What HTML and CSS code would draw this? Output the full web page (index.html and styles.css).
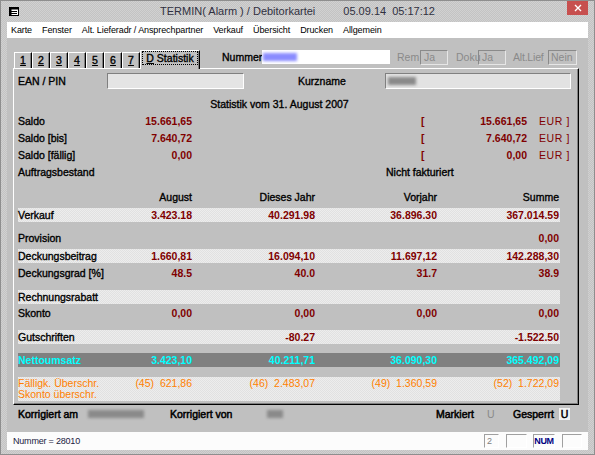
FILE: index.html
```html
<!DOCTYPE html>
<html>
<head>
<meta charset="utf-8">
<title>TERMIN</title>
<link rel="stylesheet" href="styles.css">
</head>
<body>
<div class="window">
  <div class="titlebar">
    <div class="tb-left">
      <svg class="app-icon" width="10" height="9" viewBox="0 0 10 9"><rect x="0.5" y="0.5" width="9" height="8" fill="#fff" stroke="#000"/><rect x="0" y="0" width="10" height="2.5" fill="#000"/><path d="M2 4.5h6M2 6.5h6" stroke="#000" stroke-width="1"/><rect x="0" y="0" width="2.5" height="9" fill="#000"/></svg>
    </div>
    <div class="tb-title"><span>TERMIN( Alarm ) / Debitorkartei</span><span class="tb-date">05.09.14</span><span class="tb-time">05:17:12</span></div>
    <div class="tb-right">
      <div class="close-btn"><svg width="8" height="8" viewBox="0 0 8 8"><path d="M1 1L7 7M7 1L1 7" stroke="#fff" stroke-width="1.4"/></svg></div>
    </div>
  </div>
  <div class="frame">
    <div class="menubar">
      <span>Karte</span><span>Fenster</span><span>Alt. Lieferadr / Ansprechpartner</span><span>Verkauf</span><span>Übersicht</span><span>Drucken</span><span>Allgemein</span>
    </div>
    <div class="client">
      <div class="toprow">
        <div class="tabs">
          <div class="tab"><u>1</u></div>
          <div class="tab"><u>2</u></div>
          <div class="tab"><u>3</u></div>
          <div class="tab"><u>4</u></div>
          <div class="tab"><u>5</u></div>
          <div class="tab"><u>6</u></div>
          <div class="tab"><u>7</u></div>
          <div class="tab active"><span class="focus"><u>D</u> Statistik</span></div>
        </div>
        <span class="nummer-lbl">Nummer</span>
        <div class="nummer-field"><span class="blur blur-blue"></span></div>
        <span class="dis rem-lbl">Rem</span><div class="flag">Ja</div>
        <span class="dis doku-lbl">Doku</span><div class="flag">Ja</div>
        <span class="dis alt-lbl">Alt.Lief</span><div class="flag flag-wide">Nein</div>
      </div>

      <div class="panel">
        <div class="ean-row">
          <span class="ean-lbl">EAN / PIN</span>
          <div class="sunken ean-field"></div>
          <span class="kurz-lbl">Kurzname</span>
          <div class="sunken kurz-field"><span class="blur blur-grey"></span></div>
        </div>
        <div class="heading">Statistik vom 31. August 2007</div>

        <div class="saldo-row"><span>Saldo</span><span class="val">15.661,65</span><span></span><span class="eur"><span class="val">[</span><span class="val">15.661,65<span class="cur">EUR ]</span></span></span></div>
        <div class="saldo-row"><span>Saldo [bis]</span><span class="val">7.640,72</span><span></span><span class="eur"><span class="val">[</span><span class="val">7.640,72<span class="cur">EUR ]</span></span></span></div>
        <div class="saldo-row"><span>Saldo [fällig]</span><span class="val">0,00</span><span></span><span class="eur"><span class="val">[</span><span class="val">0,00<span class="cur">EUR ]</span></span></span></div>
        <div class="auftrag-row"><span>Auftragsbestand</span><span>Nicht fakturiert</span></div>

        <div class="srow head"><span></span><span>August</span><span>Dieses Jahr</span><span>Vorjahr</span><span>Summe</span></div>
        <div class="srow band mt4"><span>Verkauf</span><span class="val">3.423.18</span><span class="val">40.291.98</span><span class="val">36.896.30</span><span class="val">367.014.59</span></div>
        <div class="srow mt9"><span>Provision</span><span></span><span></span><span></span><span class="val">0,00</span></div>
        <div class="srow band mt4"><span>Deckungsbeitrag</span><span class="val">1.660,81</span><span class="val">16.094,10</span><span class="val">11.697,12</span><span class="val">142.288,30</span></div>
        <div class="srow mt3"><span>Deckungsgrad [%]</span><span class="val">48.5</span><span class="val">40.0</span><span class="val">31.7</span><span class="val">38.9</span></div>
        <div class="srow band mt10"><span>Rechnungsrabatt</span><span></span><span></span><span></span><span></span></div>
        <div class="srow mt2"><span>Skonto</span><span class="val">0,00</span><span class="val">0,00</span><span class="val">0,00</span><span class="val">0,00</span></div>
        <div class="srow band mt10"><span>Gutschriften</span><span></span><span class="val">-80.27</span><span></span><span class="val">-1.522.50</span></div>
        <div class="srow netto mt9"><span>Nettoumsatz</span><span class="val">3.423,10</span><span class="val">40.211,71</span><span class="val">36.090,30</span><span class="val">365.492,09</span></div>
        <div class="srow band faellig mt10"><span>Fälligk. Überschr.<br>Skonto überschr.</span><span class="val">(45)&nbsp; 621,86</span><span class="val">(46)&nbsp; 2.483,07</span><span class="val">(49)&nbsp; 1.360,59</span><span class="val">(52)&nbsp; 1.722,09</span></div>
      </div>

      <div class="footer">
        <span class="f-am">Korrigiert am</span>
        <span class="blur blur-grey f-blur1"></span>
        <span class="f-von">Korrigiert von</span>
        <span class="blur blur-grey f-blur2"></span>
        <span class="f-mark">Markiert</span>
        <span class="f-u dis">U</span>
        <span class="f-gesp">Gesperrt</span>
        <span class="f-ubox">U</span>
      </div>
    </div>
    <div class="statusbar">
      <span class="st-text">Nummer = 28010</span>
      <div class="st-boxes">
        <div class="st-box st-b1">2</div>
        <div class="st-box st-b2"></div>
        <div class="st-box st-b3">NUM</div>
        <div class="st-box st-b4"></div>
      </div>
    </div>
  </div>
</div>
</body>
</html>
```

FILE: styles.css
```css
* { box-sizing: border-box; margin: 0; padding: 0; }

body {
  margin: 0;
  width: 595px;
  height: 455px;
  overflow: hidden;
  background: #c8c8c8;
  font-family: "Liberation Sans", Arial, sans-serif;
}

.window {
  width: 595px;
  height: 455px;
  border: 1px solid #8e8e8e;
  background-color: #cacaca;
  background-image: repeating-conic-gradient(#c3c3c3 0 25%, #d1d1d1 0 50%);
  background-size: 2px 2px;
  display: flex;
  flex-direction: column;
}

/* title bar */
.titlebar {
  height: 21px;
  display: grid;
  grid-template-columns: 1fr auto 1fr;
  align-items: start;
}
.tb-left { padding: 6px 0 0 8px; }
.app-icon { display: block; }
.tb-title {
  display: flex;
  font-size: 11px;
  line-height: 21px;
  color: #303040;
  white-space: nowrap;
}
.tb-date { margin-left: 28px; }
.tb-time { margin-left: 6px; }
.tb-right { display: flex; justify-content: flex-end; padding-right: 6px; }
.close-btn {
  width: 21px;
  height: 14px;
  background: #c7504f;
  display: flex;
  align-items: center;
  justify-content: center;
}

/* frame */
.frame {
  flex: 1;
  display: flex;
  flex-direction: column;
  padding: 0 6px 4px 6px;
}

.menubar {
  height: 16px;
  background: #fff;
  display: flex;
  align-items: center;
  gap: 10px;
  padding-left: 4px;
  font-size: 9px;
  letter-spacing: -0.1px;
  color: #000;
  white-space: nowrap;
}

.client {
  flex: 1;
  background: #c0c0c0;
  padding: 0 9px 0 6px;
  display: flex;
  flex-direction: column;
  font-size: 10.5px;
  -webkit-text-stroke: 0.35px #000;
  color: #000;
  white-space: nowrap;
}

/* top row: tabs + nummer + flags */
.toprow {
  height: 30px;
  display: flex;
  align-items: flex-start;
  padding-top: 12px;
}
.tabs {
  align-self: flex-end;
  display: flex;
  align-items: flex-end;
  margin-left: 1px;
}
.tab {
  width: 18px;
  height: 16px;
  border-top: 1px solid #fff;
  border-left: 1px solid #fff;
  border-right: 1px solid #000;
  box-shadow: inset -1px 0 #808080;
  text-align: center;
  line-height: 15px;
}
.tab.active {
  width: 60px;
  height: 19px;
  margin-bottom: -1px;
  background: #c0c0c0;
  position: relative;
  z-index: 2;
  padding-top: 1px;
  line-height: 12px;
}
.focus {
  display: inline-block;
  outline: 1px dotted #000;
  padding: 0 3px;
  line-height: 12px;
}

.nummer-lbl { margin-left: 22px; width: 40px; line-height: 14px; }
.nummer-field {
  width: 128px;
  height: 14px;
  background: #fff;
  display: flex;
  align-items: center;
  overflow: hidden;
}
.dis { color: #8a8a8a; -webkit-text-stroke: 0; }
.rem-lbl, .doku-lbl, .alt-lbl { line-height: 15px; }
.rem-lbl { margin-left: 7px; width: 23px; }
.doku-lbl { margin-left: 8px; width: 22px; }
.alt-lbl { margin-left: 7px; width: 35px; letter-spacing: -0.2px; }
.flag {
  width: 28px;
  height: 15px;
  border: 1px solid;
  border-color: #8a8a8a #e6e6e6 #e6e6e6 #8a8a8a;
  color: #8a8a8a;
  -webkit-text-stroke: 0;
  line-height: 13px;
  padding-left: 3px;
}
.flag-wide { width: 29px; padding-left: 2px; }

/* blurred redacted content */
.blur {
  display: inline-block;
  height: 8px;
  filter: blur(1.6px);
}
.blur-blue { width: 34px; background: #8a8cff; margin-left: 1px; }
.blur-grey { background: #8a8a8a; }

/* panel */
.panel {
  height: 337px;
  border-top: 1px solid #fff;
  border-left: 1px solid #fff;
  border-right: 1px solid #000;
  border-bottom: 1px solid #000;
  box-shadow: inset -1px -1px #808080;
  padding: 4px 0 0 4px;
  display: flex;
  flex-direction: column;
}

.ean-row {
  display: flex;
  height: 16px;
  align-items: center;
}
.ean-lbl { width: 89px; }
.sunken {
  height: 16px;
  border: 1px solid;
  border-color: #808080 #ffffff #ffffff #808080;
  background: #e4e4e4;
}
.ean-field { width: 137px; }
.kurz-lbl { margin-left: 54px; width: 87px; }
.kurz-field {
  width: 186px;
  background: #e2e2e2;
  display: flex;
  align-items: center;
}
.kurz-field .blur { width: 28px; margin-left: 2px; }

.heading {
  width: 523px;
  text-align: center;
  padding-top: 8px;
  line-height: 14px;
  margin-bottom: 2px;
}

.val {
  font-size: 10.5px;
  font-weight: bold;
  color: #800000;
  -webkit-text-stroke: 0;
  text-align: right;
}

.saldo-row {
  display: grid;
  grid-template-columns: 100px 74px 229px 149px;
  height: 17px;
  line-height: 17px;
}
.eur {
  display: flex;
  justify-content: space-between;
}
.cur {
  font-weight: normal;
  margin-left: 12px;
  letter-spacing: 0.6px;
}

.auftrag-row {
  display: grid;
  grid-template-columns: 368px auto;
  height: 17px;
  line-height: 17px;
}

.srow {
  display: grid;
  grid-template-columns: 100px 74px 123px 122px 122px;
  width: 542px;
  height: 14px;
  line-height: 14px;
}
.srow.head { margin-top: 9px; text-align: right; }
.srow.head > span:first-child { text-align: left; }

.band {
  background-color: #e6e6e6;
  background-image: repeating-conic-gradient(#e1e1e1 0 25%, #ededed 0 50%);
  background-size: 2px 2px;
}
.netto {
  background: #808080;
  color: #00ffff;
  -webkit-text-stroke: 0;
  font-weight: bold;
}
.netto .val { color: #00ffff; }

.faellig {
  height: 24px;
  line-height: 11.5px;
  padding-top: 0.5px;
  color: #ff8000;
  -webkit-text-stroke: 0;
}
.faellig .val { color: #ff8000; font-weight: normal; }

.mt2 { margin-top: 2px; }
.mt3 { margin-top: 3px; }
.mt4 { margin-top: 4px; }
.mt9 { margin-top: 9px; }
.mt10 { margin-top: 10px; }

/* footer below panel */
.footer {
  flex: 1;
  display: flex;
  align-items: flex-start;
  padding: 2px 0 0 5px;
  line-height: 14px;
  -webkit-text-stroke: 0.5px #000;
}
.f-am { width: 70px; }
.f-blur1 { width: 56px; margin-top: 3px; }
.f-von { margin-left: 26px; width: 97px; }
.f-blur2 { width: 16px; margin-top: 3px; }
.f-mark { margin-left: 153px; width: 51px; }
.f-u { width: 26px; }
.f-gesp { width: 46px; }
.f-ubox {
  width: 11px;
  height: 12px;
  margin-top: 1px;
  background: #f2f2f2;
  text-align: center;
  line-height: 12px;
}

/* status bar */
.statusbar {
  height: 18px;
  background: #fcfcfc;
  display: flex;
  align-items: center;
  padding: 0 6px 0 6px;
  font-size: 9px;
  letter-spacing: -0.2px;
  color: #1a1a40;
}
.st-boxes {
  margin-left: auto;
  display: flex;
  align-items: center;
  gap: 6px;
}
.st-box {
  height: 14px;
  border: 1px solid;
  border-color: #a0a0a0 #ffffff #ffffff #a0a0a0;
  font-size: 9px;
  line-height: 12px;
}
.st-b1 { width: 15px; color: #808080; padding-left: 2px; }
.st-b2 { width: 21px; margin-left: 1px; }
.st-b3 { width: 22px; color: #000080; text-align: center; font-weight: bold; letter-spacing: -0.4px; }
.st-b4 { width: 20px; margin-left: 1px; }
```
